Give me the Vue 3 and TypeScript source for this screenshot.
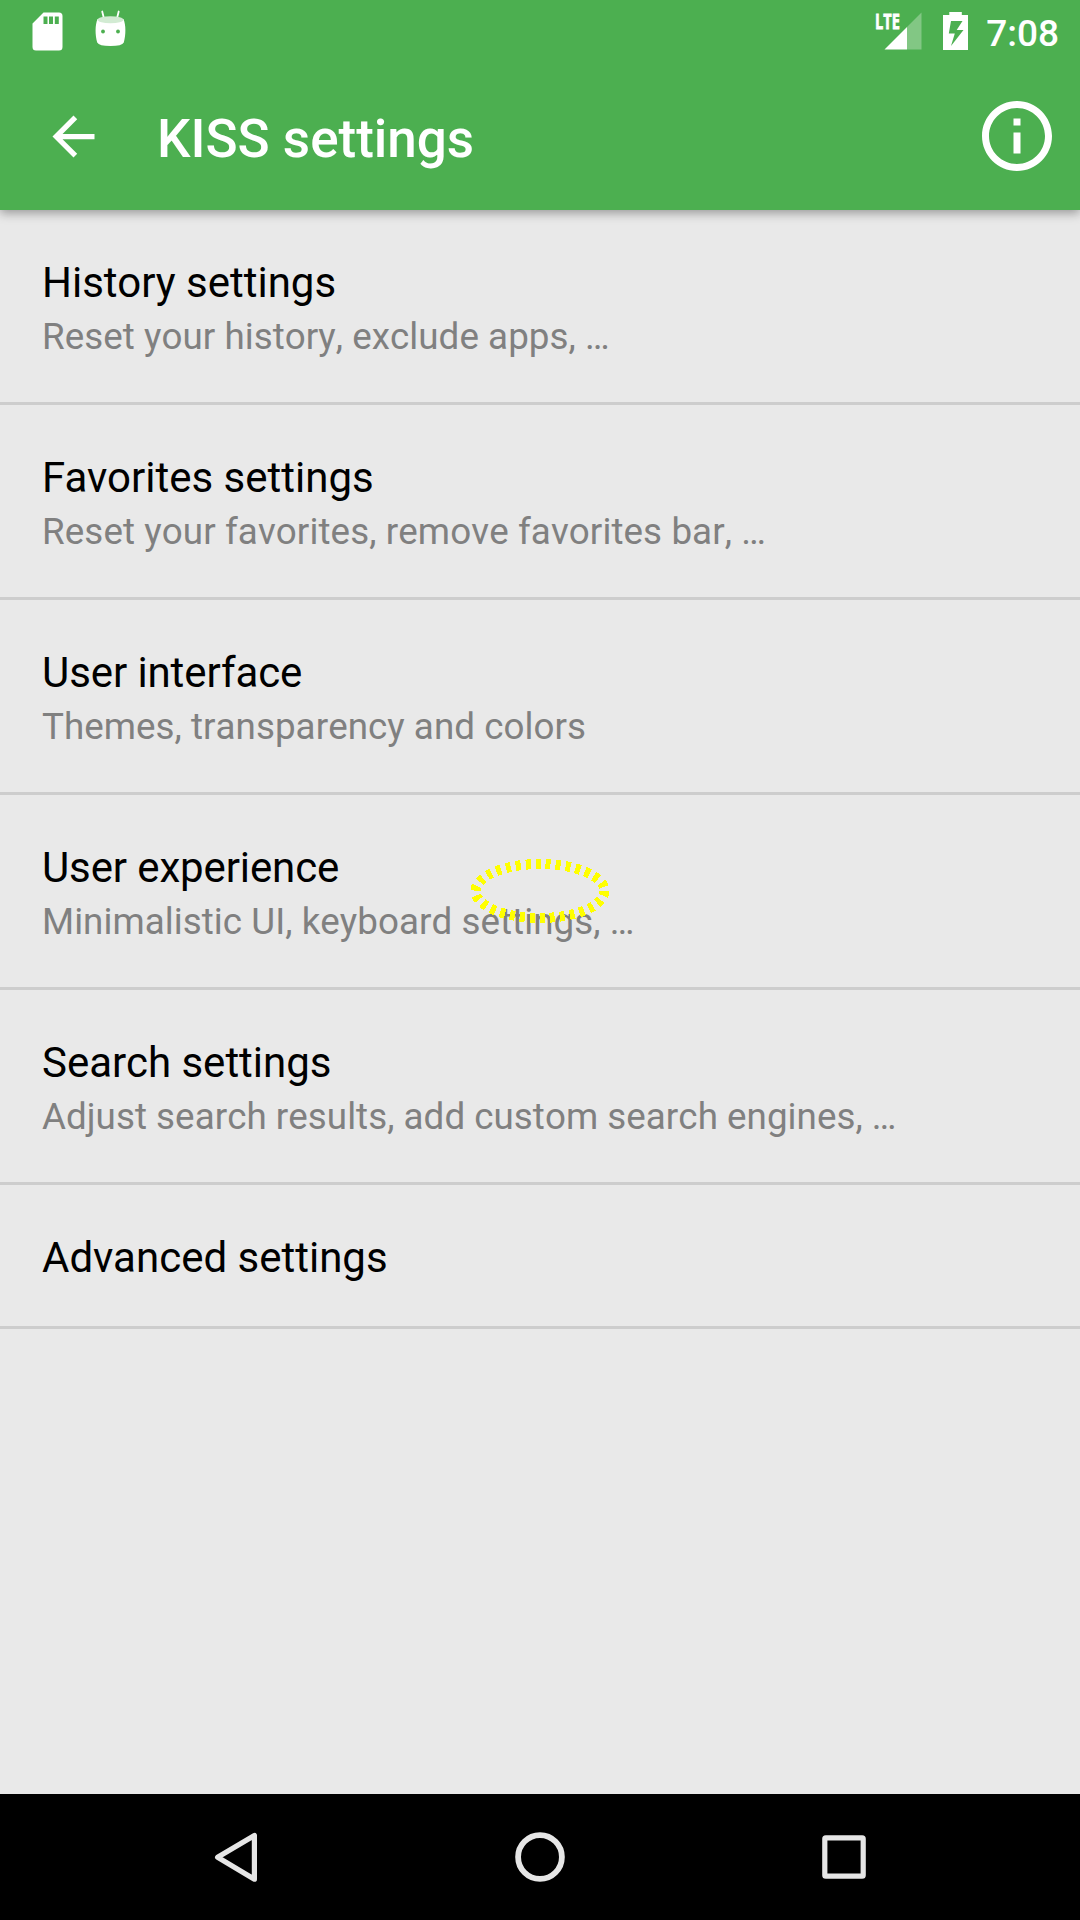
<script setup lang="ts">
interface SettingsEntry {
  title: string
  summary?: string
  titleTracking?: number
  summaryTracking?: number
}

const entries: SettingsEntry[] = [
  { title: 'History settings', summary: 'Reset your history, exclude apps, …', summaryTracking: 0.05 },
  { title: 'Favorites settings', summary: 'Reset your favorites, remove favorites bar, …', summaryTracking: 0.095 },
  { title: 'User interface', summary: 'Themes, transparency and colors', titleTracking: -0.09, summaryTracking: 0.04 },
  { title: 'User experience', summary: 'Minimalistic UI, keyboard settings, …', titleTracking: -0.12, summaryTracking: 0.05 },
  { title: 'Search settings', summary: 'Adjust search results, add custom search engines, …', summaryTracking: 0.035 },
  { title: 'Advanced settings' },
]

const tracking = (value = 0) => ({ letterSpacing: `${value}px` })
</script>

<template>
  <div class="screen">
    <header class="header">
      <div class="status">
        <div class="status-group">
          <svg class="icon" width="31" height="39" viewBox="0 0 31 39">
            <path fill="#fff" fill-rule="evenodd" d="M11.5 .5H27a3.5 3.5 0 0 1 3.500 3.500V35a3.500 3.500 0 0 1-3.500 3.500H4A3.500 3.500 0 0 1 .5 35V11.500zM11.500 4.500v7.500h4V4.500zm5.500 0v7.500h4V4.500zm5.800 0v7.500h4V4.500z" />
          </svg>
          <svg class="icon droid" width="31" height="37" viewBox="0 0 31 37">
            <path stroke="#fff" stroke-width="1.800" stroke-linecap="round" d="M7.200 1.500l1.500 6M23.700 1.500l-1.500 6" />
            <path fill="#fff" d="M2.500 9Q15.500 14 28.500 9C31 15 31 25 28.800 32.500Q27 36 15.500 36T2.200 32.500C0 25 0 15 2.500 9z" />
            <ellipse cx="15.500" cy="9.700" rx="13" ry="3.500" fill="#d2ebd3" />
            <circle cx="8" cy="21.500" r="1.900" fill="#4caf50" />
            <circle cx="23" cy="21.500" r="1.900" fill="#4caf50" />
          </svg>
        </div>
        <div class="status-group">
          <svg class="signal" width="54" height="50" viewBox="-6 -12 54 50">
            <path fill="#fff" fill-opacity=".3" d="M47.500 .500v37H33V15z" />
            <path fill="#fff" d="M33 15v22.500H10.500z" />
            <text class="lte" transform="translate(1.100 17) scale(.66 1)" textLength="37.500" lengthAdjust="spacingAndGlyphs">LTE</text>
          </svg>
          <svg class="icon battery" width="25" height="38" viewBox="0 0 25 38">
            <path fill="#fff" fill-rule="evenodd" d="M6.300 0h12.500v3H25v35H0V3h6.300zM8 9L5.800 21.500h6L8 34 20.500 18h-6.800L19.500 9z" />
          </svg>
          <span class="clock">7:08</span>
        </div>
      </div>
      <div class="toolbar">
        <svg class="back" width="63" height="63" viewBox="0 0 24 24">
          <path fill="#fff" d="M20 11H7.830l5.590-5.590L12 4l-8 8 8 8 1.410-1.410L7.830 13H20z" />
        </svg>
        <h1 class="heading">KISS settings</h1>
        <svg class="info" width="84" height="84" viewBox="0 0 24 24">
          <path fill="#fff" d="M11 17h2v-6h-2v6zm1-15C6.480 2 2 6.480 2 12s4.480 10 10 10 10-4.480 10-10S17.520 2 12 2zm0 18c-4.410 0-8-3.590-8-8s3.590-8 8-8 8 3.590 8 8-3.590 8-8 8zM11 9h2V7h-2v2z" />
        </svg>
      </div>
    </header>

    <main class="list">
      <div v-for="entry in entries" :key="entry.title" class="row">
        <div class="title" :style="tracking(entry.titleTracking)">{{ entry.title }}</div>
        <div v-if="entry.summary" class="summary" :style="tracking(entry.summaryTracking)">{{ entry.summary }}</div>
      </div>
    </main>

    <svg class="marker" width="140" height="66" viewBox="0 0 140 66">
      <ellipse cx="70" cy="33" rx="64.500" ry="27" fill="none" stroke="#ff0" stroke-width="10" stroke-dasharray="5 5" shape-rendering="crispEdges" />
    </svg>

    <nav class="nav">
      <svg width="60" height="60" viewBox="0 0 60 60">
        <path d="M11.600 30.300L48.400 8.400V52.200z" stroke-width="5.200" />
      </svg>
      <svg width="60" height="60" viewBox="0 0 60 60">
        <circle cx="30" cy="30" r="21.900" stroke-width="5.800" />
      </svg>
      <svg width="60" height="60" viewBox="0 0 60 60">
        <rect x="10.800" y="10.800" width="38.400" height="38.400" rx="1" stroke-width="5.200" />
      </svg>
    </nav>
  </div>
</template>

<style>
body {
  background: #e9e9e9;
}
</style>

<style scoped>
.screen {
  position: relative;
  display: flex;
  flex-direction: column;
  width: 1080px;
  height: 1920px;
  overflow: hidden;
  background: #e9e9e9;
  font-family: Roboto, "Liberation Sans", sans-serif;
}

svg {
  display: block;
  flex: none;
}

.header {
  position: relative;
  height: 210px;
  flex: none;
  background: #4caf50;
  color: #fff;
  box-shadow: 0 3px 10px rgba(0, 0, 0, 0.36);
}

.status {
  display: flex;
  justify-content: space-between;
  height: 63px;
  padding: 0 21px 0 32px;
}

.status-group {
  display: flex;
  align-items: flex-start;
}

.icon {
  margin-top: 12px;
}

.droid {
  margin: 10px 0 0 32px;
}

.battery {
  margin-left: 21px;
}

.clock {
  margin: 12px 0 0 18px;
  font-size: 37px;
  font-weight: 500;
  line-height: 43px;
}

.signal {
  overflow: visible;
}

.lte {
  fill: #fff;
  stroke: #fff;
  stroke-width: 0.8px;
  font: 700 22px "Open Sans", sans-serif;
}

.toolbar {
  display: flex;
  align-items: center;
  height: 146px;
  padding: 0 21px 0 42px;
}

.heading {
  flex: 1;
  margin: 6px 0 0 52px;
  font-size: 53px;
  font-weight: 500;
  line-height: 62px;
}

.list {
  flex: 1;
}

.row {
  height: 195px;
  box-sizing: border-box;
  padding: 48px 42px 0;
  border-bottom: 3px solid #cdcdcd;
}

.row:last-child {
  height: 144px;
}

.title {
  font-size: 42px;
  line-height: 49px;
  color: #000;
}

.summary {
  margin-top: 8px;
  font-size: 36.75px;
  line-height: 43px;
  color: #808080;
  font-kerning: none;
}

.marker {
  position: absolute;
  left: 470px;
  top: 858px;
}

.nav {
  display: flex;
  flex: none;
  align-items: center;
  justify-content: center;
  gap: 244px;
  height: 126px;
  background: #000;
}

.nav svg {
  fill: none;
  stroke: #e6e6e6;
  stroke-linejoin: round;
}
</style>
